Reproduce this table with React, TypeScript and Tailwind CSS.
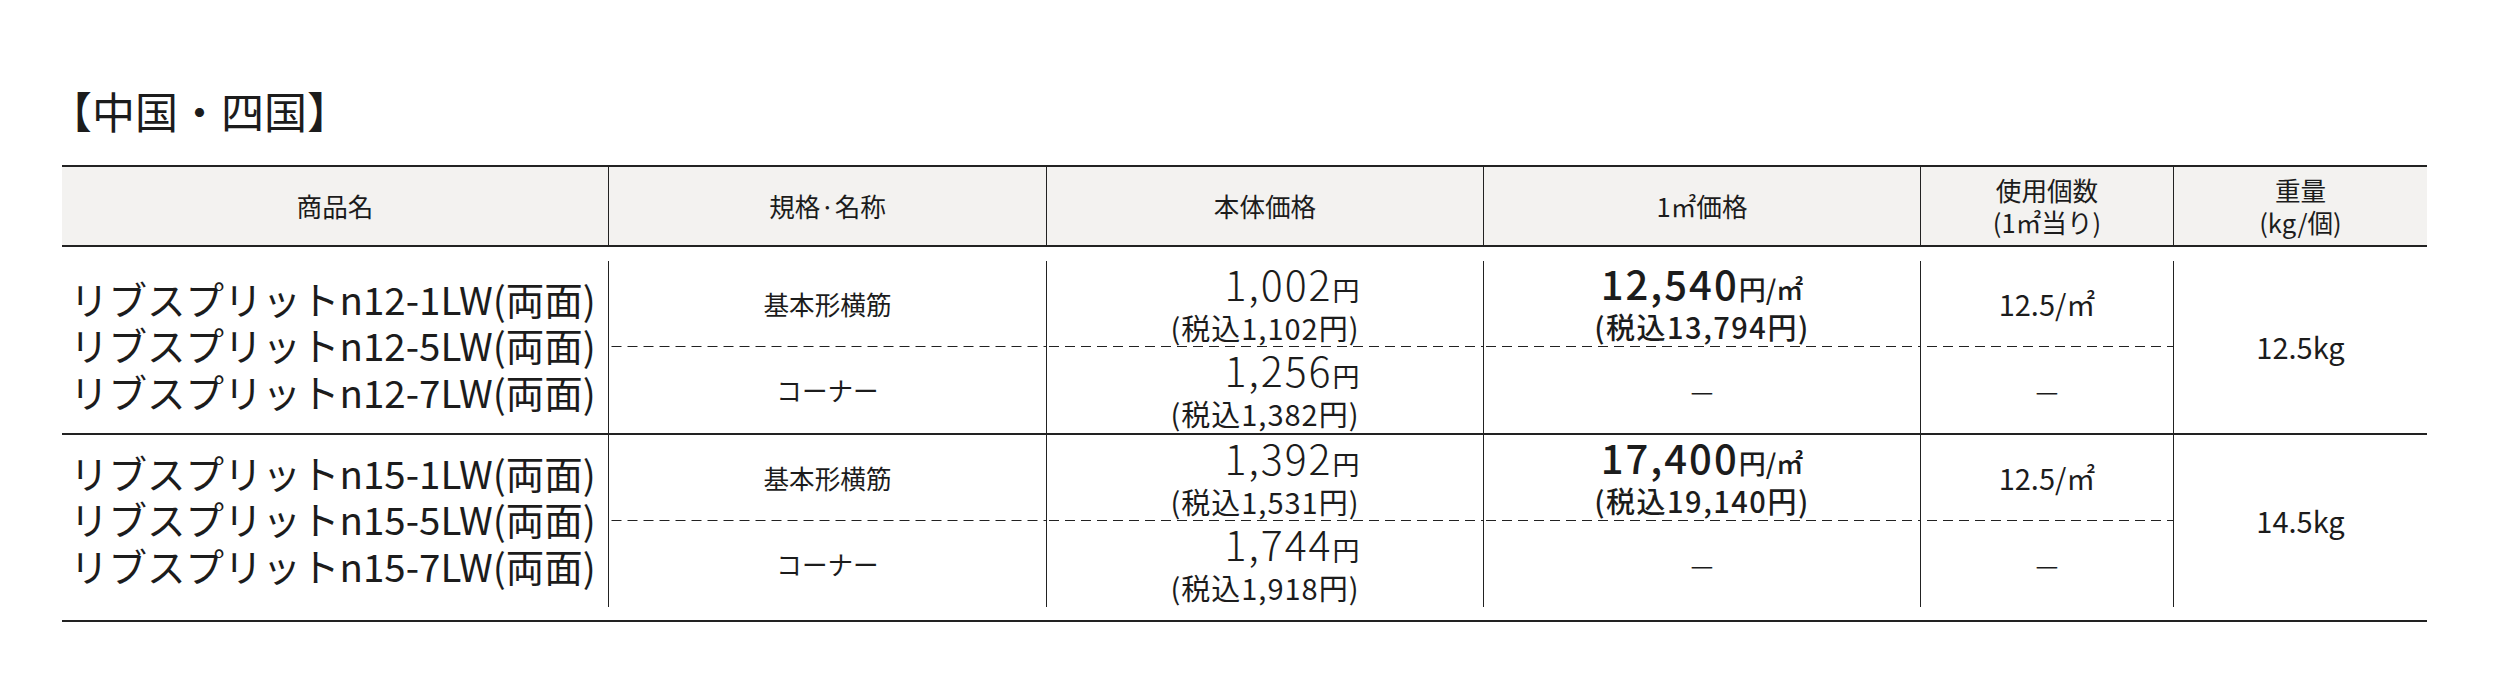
import React from "react";

const dashed =
  "bg-[linear-gradient(to_right,#222_10px,transparent_10px)] bg-[length:16px_1.5px] bg-bottom bg-repeat-x";

type Group = {
  names: string[];
  price1: string;
  tax1: string;
  price2: string;
  tax2: string;
  sqm: string;
  sqmTax: string;
  weight: string;
};

const groups: Group[] = [
  {
    names: [
      "リブスプリットn12-1LW(両面)",
      "リブスプリットn12-5LW(両面)",
      "リブスプリットn12-7LW(両面)",
    ],
    price1: "1,002",
    tax1: "(税込1,102円)",
    price2: "1,256",
    tax2: "(税込1,382円)",
    sqm: "12,540",
    sqmTax: "(税込13,794円)",
    weight: "12.5kg",
  },
  {
    names: [
      "リブスプリットn15-1LW(両面)",
      "リブスプリットn15-5LW(両面)",
      "リブスプリットn15-7LW(両面)",
    ],
    price1: "1,392",
    tax1: "(税込1,531円)",
    price2: "1,744",
    tax2: "(税込1,918円)",
    sqm: "17,400",
    sqmTax: "(税込19,140円)",
    weight: "14.5kg",
  },
];

function Price({ value, tax }: { value: string; tax: string }) {
  return (
    <div className="inline-flex flex-col items-end">
      <div className="leading-[34px]">
        <span className="text-[41px] font-light tracking-[2px]">{value}</span>
        <span className="text-[27px]">円</span>
      </div>
      <div className="text-[29px] leading-[32px] tracking-[1px]">{tax}</div>
    </div>
  );
}

function GroupRows({ g }: { g: Group }) {
  return (
    <div className="grid grid-cols-[546px_438px_437px_437px_253px_254px] grid-rows-[86px_86px]">
      <div className="row-span-2 flex flex-col justify-center pl-[8px] pb-[5px] text-[38.5px] leading-[46.5px]">
        {g.names.map((n) => (
          <div key={n}>{n}</div>
        ))}
      </div>
      {/* top sub-row */}
      <div className={`border-l-[1.5px] border-[#222] flex items-center justify-center text-[25.6px] ${dashed}`}>
        基本形横筋
      </div>
      <div className={`border-l-[1.5px] border-[#222] flex items-center justify-center ${dashed}`}>
        <Price value={g.price1} tax={g.tax1} />
      </div>
      <div className={`border-l-[1.5px] border-[#222] flex flex-col items-center justify-center font-bold ${dashed}`}>
        <div className="leading-[34px]">
          <span className="text-[40px] font-medium tracking-[2px]">{g.sqm}</span>
          <span className="text-[27px] font-medium">円/㎡</span>
        </div>
        <div className="text-[29px] leading-[32px] font-medium tracking-[1.5px]">{g.sqmTax}</div>
      </div>
      <div className={`border-l-[1.5px] border-[#222] flex items-center justify-center text-[29px] ${dashed}`}>
        12.5/㎡
      </div>
      <div className="row-span-2 col-start-6 row-start-1 border-l-[1.5px] border-[#222] flex items-center justify-center text-[29px]">
        {g.weight}
      </div>
      {/* bottom sub-row */}
      <div className="col-start-2 border-l-[1.5px] border-[#222] flex items-center justify-center text-[25.6px]">
        コーナー
      </div>
      <div className="border-l-[1.5px] border-[#222] flex items-center justify-center">
        <Price value={g.price2} tax={g.tax2} />
      </div>
      <div className="border-l-[1.5px] border-[#222] flex items-center justify-center text-[25.6px]">
        —
      </div>
      <div className="border-l-[1.5px] border-[#222] flex items-center justify-center text-[25.6px]">
        —
      </div>
    </div>
  );
}

export default function App() {
  return (
    <div className="w-[2514px] h-[690px] bg-white text-[#1c1c1c] font-['Noto_Sans_CJK_JP','Noto_Sans',sans-serif]">
      <div className="pl-[49px] pt-[82px]">
        <h2 className="text-[43px] leading-[57px] font-normal">【中国・四国】</h2>
      </div>
      <div className="ml-[62px] mt-[26px] w-[2365px]">
        <div className="grid grid-cols-[546px_438px_437px_437px_253px_254px] h-[82px] border-y-2 border-[#222] bg-[#f3f2f0] text-[25.6px] leading-[32px] text-center">
          <div className="flex items-center justify-center">商品名</div>
          <div className="border-l-[1.5px] border-[#222] flex items-center justify-center">規格·名称</div>
          <div className="border-l-[1.5px] border-[#222] flex items-center justify-center">本体価格</div>
          <div className="border-l-[1.5px] border-[#222] flex items-center justify-center">1㎡価格</div>
          <div className="border-l-[1.5px] border-[#222] flex flex-col items-center justify-center">
            <div>使用個数</div>
            <div>(1㎡当り)</div>
          </div>
          <div className="border-l-[1.5px] border-[#222] flex flex-col items-center justify-center">
            <div>重量</div>
            <div>(kg/個)</div>
          </div>
        </div>
        <div className="pt-[14px] pb-[13px] border-b-2 border-[#222]">
          <div className="border-b-2 border-[#222]">
            <GroupRows g={groups[0]} />
          </div>
          <GroupRows g={groups[1]} />
        </div>
      </div>
    </div>
  );
}
